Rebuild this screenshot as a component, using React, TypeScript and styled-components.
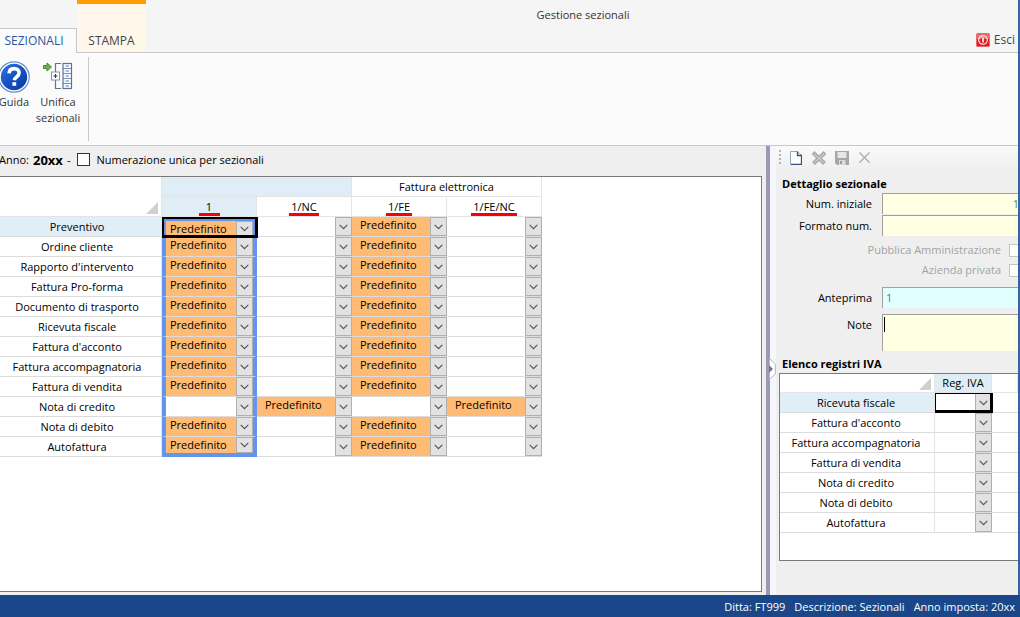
import React from "react";
import styled, { createGlobalStyle, css } from "styled-components";

const GlobalStyle = createGlobalStyle`
  *, *::before, *::after { box-sizing: border-box; }
  body { margin: 0; background: #efefef; }
  body, button, input, select, textarea {
    font-family: "Open Sans", "Noto Sans", sans-serif;
    font-size: 11px;
    line-height: 16px;
    color: #000;
  }
`;

const Window = styled.div`
  display: flex;
  flex-direction: column;
  min-height: 100vh;
`;

const Frame = styled.div`
  flex: 1;
  display: flex;
  flex-direction: column;
  border-right: 2px solid #3564a6;
  overflow: hidden;
`;

/* Title bar and ribbon */

const TitleBar = styled.header`
  display: grid;
  grid-template-columns: 1fr auto 1fr;
  height: 53px;
  background: #f5f5f5;
  border-bottom: 1px solid #c8c8c8;
`;

const Title = styled.h1`
  margin: 7px 0 0;
  padding-left: 148px;
  font-size: 11px;
  line-height: 16px;
  font-weight: 400;
  color: #333;
`;

const Tabs = styled.nav`
  display: flex;
  align-items: flex-end;
`;

const Tab = styled.button<{ $active?: boolean }>`
  height: ${(p) => (p.$active ? 25 : 53)}px;
  width: ${(p) => (p.$active ? 77 : 69)}px;
  margin-bottom: -1px;
  padding: 0;
  border: 0;
  font-size: 12px;
  ${(p) =>
    p.$active
      ? css`
          padding-right: 8px;
          background: #fbfbfb;
          border-top: 1px solid #c8c8c8;
          border-right: 1px solid #c8c8c8;
          color: #2b579a;
        `
      : css`
          padding-top: 25px;
          background: linear-gradient(90deg, #fff6ee, #fff8e8);
          border-top: 4px solid #ff9c00;
          border-bottom: 1px solid #c8c8c8;
          color: #444;
        `}
`;

const ExitButton = styled.button`
  display: flex;
  align-items: center;
  justify-self: end;
  align-self: end;
  gap: 4px;
  height: 24px;
  padding: 0 3px 0 0;
  border: 0;
  background: none;
  font-size: 12px;
  color: #444;
`;

const Ribbon = styled.div`
  display: flex;
  height: 93px;
  background: #fbfbfb;
  border-bottom: 1px solid #c8c8c8;
`;

const RibbonGroup = styled.div`
  display: flex;
  align-items: flex-start;
  margin: 4px 0;
  padding-right: 3px;
  border-right: 1px solid #c8c8c8;
`;

const RibbonButton = styled.button<{ $width: number; $bleed?: number }>`
  display: flex;
  flex-direction: column;
  align-items: center;
  width: ${(p) => p.$width}px;
  margin-left: ${(p) => -(p.$bleed ?? 0)}px;
  padding: 3px 0 0;
  border: 0;
  background: none;
  color: #333;
`;

/* Main split */

const Workspace = styled.div`
  flex: 1;
  display: flex;
`;

const Main = styled.main`
  flex: 1;
  min-width: 0;
  display: flex;
  flex-direction: column;
  padding: 0 4px 3px 0;
`;

const YearBar = styled.div`
  display: flex;
  align-items: center;
  gap: 4px;
  height: 30px;
  margin-left: -1px;
  padding-bottom: 3px;
`;

const Year = styled.b`
  font-size: 13px;
`;

const CheckLabel = styled.label`
  display: flex;
  align-items: center;
  gap: 6px;
  margin-left: 3px;
`;

const CheckBox = styled.input.attrs({ type: "checkbox" })`
  appearance: none;
  width: 13px;
  height: 13px;
  margin: 0;
  background: #fff;
  border: 1px solid #333;

  &:disabled {
    border-color: #c4c4c4;
  }
`;

const GridFrame = styled.div`
  flex: 1;
  background: #fff;
  border: 1px solid #7a7a7a;
  border-left: 0;
`;

const Grid = styled.table<{ $width: string }>`
  width: ${(p) => p.$width};
  table-layout: fixed;
  border-collapse: separate;
  border-spacing: 0;
`;

const HeadCell = styled.th<{ $tint?: boolean; $height?: number }>`
  height: ${(p) => p.$height ?? 20}px;
  padding: 0;
  font-weight: 400;
  text-align: center;
  background: ${(p) => (p.$tint ? "#dfeef6" : "#fff")};
  border-right: 1px solid #e4e4e4;
  border-bottom: 1px solid #e4e4e4;
`;

const Corner = styled(HeadCell)`
  vertical-align: bottom;

  svg {
    display: block;
    margin: 0 3px 2px auto;
  }
`;

const RowHead = styled.th<{ $active?: boolean; $shift?: number }>`
  height: 20px;
  padding: 0 ${(p) => p.$shift ?? 0}px 0 0;
  font-weight: 400;
  text-align: center;
  white-space: nowrap;
  background: ${(p) => (p.$active ? "#e0eef7" : "#fff")};
  border-right: 1px solid #e4e4e4;
  border-bottom: 1px solid #dcdcdc;
`;

const Marked = styled.span`
  display: inline-block;
  min-width: 21px;
  height: 18px;
  padding: 2px 2px 0;
  line-height: 14px;
  border-bottom: 3px solid #f5000c;
`;

const Cell = styled.td<{ $selected?: boolean; $last?: boolean; $focus?: boolean }>`
  position: relative;
  height: 20px;
  padding: 0;
  vertical-align: top;
  border-bottom: 1px solid #dcdcdc;
  ${(p) =>
    p.$selected &&
    css`
      border-left: 4px solid #6495ed;
      border-right: 4px solid #6495ed;
    `}
  ${(p) =>
    p.$last &&
    css`
      border-bottom: 4px solid #6495ed;
    `}
  ${(p) =>
    p.$focus &&
    p.$selected &&
    css`
      border-top: 4px solid #6495ed;
    `}
  ${(p) =>
    p.$focus &&
    css`
      &::after {
        content: "";
        position: absolute;
        z-index: 2;
        inset: ${p.$selected ? "-4px -5px -2px -4px" : "0 -1px -1px 0"};
        border: 2px solid #000;
        border-width: ${p.$selected ? "2px 3px 3px 2px" : "1px 3px 3px 1px"};
        pointer-events: none;
      }
    `}
`;

const Drop = styled.div<{ $filled: boolean; $height: number }>`
  display: grid;
  grid-template-columns: 1fr 17px;
  grid-template-rows: 100%;
  height: ${(p) => p.$height}px;
  background: ${(p) => (p.$filled ? "#ffbb74" : "#fff")};

  > * {
    grid-row: 1;
  }
`;

const Select = styled.select<{ $inset: number }>`
  appearance: none;
  grid-column: 1 / 3;
  width: 100%;
  min-width: 0;
  height: 16px;
  padding: 0 0 0 ${(p) => p.$inset}px;
  border: 0;
  border-radius: 0;
  outline: 0;
  background: none;
`;

const Chevron = styled.span`
  grid-column: 2;
  display: flex;
  align-items: center;
  justify-content: center;
  background: #e2e2e2;
  border: 1px solid #b0b0b0;
  pointer-events: none;
`;

/* Splitter */

const Splitter = styled.div`
  position: relative;
  width: 10px;
  background: #f6f6fd;
  border-left: 4px solid #9b9ab6;

  svg {
    position: absolute;
    left: -1px;
    top: 212px;
  }
`;

/* Detail panel */

const Side = styled.aside`
  width: 242px;
  overflow: hidden;
  padding-left: 3px;
`;

const SideToolbar = styled.div`
  display: flex;
  align-items: center;
  gap: 4px;
  height: 25px;
  margin-left: -3px;
  padding: 0 0 2px 3px;
  background: linear-gradient(#fafafa, #efefef);
`;

const ToolButton = styled.button`
  display: flex;
  align-items: center;
  justify-content: center;
  width: 19px;
  height: 20px;
  padding: 0;
  border: 0;
  background: none;
`;

const Heading = styled.h2`
  margin: 0;
  padding: 5px 0 1px 3px;
  font-size: 11px;
  line-height: 16px;
  font-weight: 700;
  white-space: nowrap;
`;

const Field = styled.div<{ $gap?: number }>`
  display: grid;
  grid-template-columns: 93px 1fr;
  column-gap: 10px;
  margin: 0 -4px ${(p) => p.$gap ?? 1}px 0;

  label {
    padding-top: 3px;
    text-align: right;
    white-space: nowrap;
  }
`;

const inputBox = css<{ $fill: string }>`
  width: 100%;
  min-width: 0;
  margin: 0;
  border: 0 solid #a0a0a0;
  border-width: 1px 0 0 1px;
  border-radius: 0;
  outline: 0;
  background: ${(p) => p.$fill};
`;

const TextInput = styled.input<{ $fill: string; $right?: boolean }>`
  ${inputBox}
  height: 21px;
  padding: 0 3px 1px;
  text-align: ${(p) => (p.$right ? "right" : "left")};
  color: #6b7777;
`;

const NoteArea = styled.textarea<{ $fill: string }>`
  ${inputBox}
  display: block;
  height: 37px;
  padding: 1px 2px;
  resize: none;
`;

const NoteBox = styled.div`
  position: relative;

  &::after {
    content: "";
    position: absolute;
    left: 2px;
    top: 3px;
    width: 1px;
    height: 15px;
    background: #000;
  }
`;

const DisabledCheck = styled.label`
  display: flex;
  align-items: center;
  justify-content: flex-end;
  gap: 8px;
  height: 20px;
  margin-right: -4px;
  white-space: nowrap;
  color: #a3a3a3;

  input {
    flex: none;
  }
`;

const Checks = styled.div`
  padding: 3px 0 7px;
`;

const RegisterFrame = styled.div`
  height: 188px;
  background: #fff;
  border: 1px solid #7a7a7a;
  border-right: 0;
`;

const StatusBar = styled.footer`
  display: flex;
  justify-content: flex-end;
  align-items: center;
  gap: 9px;
  height: 22px;
  padding: 1px 5px 0 0;
  background: #19478a;
  color: #fff;
`;

/* Icons */

const ChevronIcon = () => (
  <svg width="9" height="6" viewBox="0 0 9 6" fill="none" stroke="#555" strokeWidth="1.2">
    <path d="M.7.9 4.5 4.7 8.3.9" />
  </svg>
);

const CornerIcon = () => (
  <svg width="12" height="12" viewBox="0 0 12 12">
    <path d="M12 0v12H0z" fill="#cfcfcf" />
  </svg>
);

const HelpIcon = () => (
  <svg width="34" height="34" viewBox="0 0 34 34">
    <defs>
      <linearGradient id="help" x1="0" y1="0" x2="1" y2="1">
        <stop offset="0" stopColor="#2f74e0" />
        <stop offset=".5" stopColor="#1650c4" />
        <stop offset="1" stopColor="#0b3a9c" />
      </linearGradient>
    </defs>
    <circle cx="17" cy="17" r="15.2" fill="#fff" stroke="#6a8cc8" strokeWidth="1.2" />
    <circle cx="17" cy="17" r="13.2" fill="url(#help)" />
    <path
      d="M12 13.4c.2-3.2 2.2-4.8 5.1-4.8 3 0 5 1.6 5 4.2 0 3.900-4.400 3.900-4.800 7.400"
      fill="none"
      stroke="#fff"
      strokeWidth="3.6"
    />
    <rect x="15.4" y="22.2" width="3.8" height="3.6" fill="#fff" />
  </svg>
);

const MergeIcon = () => (
  <svg width="34" height="34" viewBox="0 0 34 34">
    <path d="M2.500 5.500H6V3l4.500 4L6 11V8.500H2.500z" fill="#6fb354" stroke="#3f8a35" />
    <g fill="none" stroke="#62748c" strokeWidth="1.2">
      <path d="M20 3.500h-5.500v25H20" />
      <rect x="22" y="3.500" width="8.500" height="25" fill="#f8fbff" />
      <path d="M22 8.500h8.500M22 13.500h8.500M22 18.500h8.500M22 23.500h8.500" strokeWidth=".8" />
    </g>
    <path d="M24.500 6h3.500M24.500 11h3.500M24.500 16h3.500M24.500 21h3.500M24.500 26h3.500" stroke="#4a86e8" strokeWidth="1.200" />
    <rect x="10.500" y="12" width="8" height="8" fill="#fff" stroke="#8793a5" />
    <path d="M12.500 16h4M14.500 14v4" stroke="#26384f" strokeWidth="1.100" />
  </svg>
);

const PowerIcon = () => (
  <svg width="14" height="14" viewBox="0 0 14 14">
    <rect width="14" height="14" rx="1.5" fill="#ee6a6a" />
    <rect x="1" y="6" width="12" height="7" fill="#dd1c22" />
    <circle cx="7" cy="7" r="4.3" fill="none" stroke="#fff" strokeWidth="1.1" />
    <path d="M7 4.600v4.800" stroke="#fff" strokeWidth="1.5" />
  </svg>
);

const GripIcon = () => (
  <svg width="3" height="15" viewBox="0 0 3 15" fill="#b4b4b4">
    {[0, 4, 8, 12].map((y) => (
      <rect key={y} y={y} width="2" height="2" />
    ))}
  </svg>
);

const NewIcon = () => (
  <svg width="12" height="14" viewBox="0 0 12 14">
    <path d="M.5.5h7l4 4v9H.5z" fill="#fff" stroke="#8fa5c4" />
    <path d="M7.500.5v4h4v8.800H1" fill="none" stroke="#34507c" strokeWidth="1.3" />
  </svg>
);

const DeleteIcon = () => (
  <svg width="16" height="16" viewBox="0 0 16 16">
    <path d="M2 2.500 13.500 13.500M14 2.500 2.500 13.500" stroke="#a9a9a9" strokeWidth="4" />
    <path d="M3 3.500 12.500 12.500M13 3.500 3.500 12.500" stroke="#c8c8c8" strokeWidth="1.5" />
  </svg>
);

const SaveIcon = () => (
  <svg width="14" height="14" viewBox="0 0 14 14">
    <path d="M0 0h14v14H2l-2-2z" fill="#a6a6a6" />
    <rect x="2.5" y="1" width="9" height="6" fill="#e6e6e6" />
    <rect x="4" y="9" width="6.5" height="5" fill="#dcdcdc" />
    <rect x="5" y="10" width="2" height="3" fill="#999" />
  </svg>
);

const CancelIcon = () => (
  <svg width="11" height="11" viewBox="0 0 11 11">
    <path d="M.5.5l10 10M10.500.5l-10 10" stroke="#aaa" strokeWidth="1.3" />
  </svg>
);

const HandleIcon = () => (
  <svg width="7" height="22" viewBox="0 0 7 22">
    <path d="M.5.5 6.300 6v10L.5 21.500z" fill="#fff" stroke="#b5b4cb" />
    <path d="M0 7l4 4-4 4z" fill="#77768f" />
  </svg>
);

/* Content */

const columns = ["1", "1/NC", "1/FE", "1/FE/NC"];

const documents = [
  "Preventivo",
  "Ordine cliente",
  "Rapporto d'intervento",
  "Fattura Pro-forma",
  "Documento di trasporto",
  "Ricevuta fiscale",
  "Fattura d'acconto",
  "Fattura accompagnatoria",
  "Fattura di vendita",
  "Nota di credito",
  "Nota di debito",
  "Autofattura",
];

const registers = [
  "Ricevuta fiscale",
  "Fattura d'acconto",
  "Fattura accompagnatoria",
  "Fattura di vendita",
  "Nota di credito",
  "Nota di debito",
  "Autofattura",
];

const isDefault = (doc: string, col: string) =>
  (doc === "Nota di credito") === col.endsWith("NC");

interface ComboProps {
  label: string;
  filled?: boolean;
  inset?: number;
  height?: number;
}

function Combo({ label, filled = false, inset = 8, height = 19 }: ComboProps) {
  return (
    <Drop $filled={filled} $height={height}>
      <Select aria-label={label} defaultValue={filled ? "d" : ""} $inset={inset}>
        <option value="" />
        <option value="d">Predefinito</option>
      </Select>
      <Chevron>
        <ChevronIcon />
      </Chevron>
    </Drop>
  );
}

export default function App() {
  const lastRow = documents.length - 1;

  return (
    <Window>
      <GlobalStyle />
      <Frame>
        <TitleBar>
          <Tabs>
            <Tab $active>SEZIONALI</Tab>
            <Tab>STAMPA</Tab>
          </Tabs>
          <Title>Gestione sezionali</Title>
          <ExitButton>
            <PowerIcon />
            Esci
          </ExitButton>
        </TitleBar>
        <Ribbon>
          <RibbonGroup>
            <RibbonButton $width={34} $bleed={3}>
              <HelpIcon />
              Guida
            </RibbonButton>
            <RibbonButton $width={54}>
              <MergeIcon />
              <span>
                Unifica
                <br />
                sezionali
              </span>
            </RibbonButton>
          </RibbonGroup>
        </Ribbon>
        <Workspace>
          <Main>
            <YearBar>
              <span>Anno:</span>
              <Year>20xx</Year>
              <span>-</span>
              <CheckLabel>
                <CheckBox />
                Numerazione unica per sezionali
              </CheckLabel>
            </YearBar>
            <GridFrame>
              <Grid $width="542px">
                <colgroup>
                  <col width="162" />
                  <col width="95" />
                  <col width="95" />
                  <col width="95" />
                  <col width="95" />
                </colgroup>
                <thead>
                  <tr>
                    <Corner rowSpan={2}>
                      <CornerIcon />
                    </Corner>
                    <HeadCell colSpan={2} $tint />
                    <HeadCell colSpan={2}>Fattura elettronica</HeadCell>
                  </tr>
                  <tr>
                    {columns.map((c, i) => (
                      <HeadCell key={c} $tint={i === 0}>
                        <Marked>{c}</Marked>
                      </HeadCell>
                    ))}
                  </tr>
                </thead>
                <tbody>
                  {documents.map((d, r) => (
                    <tr key={d}>
                      <RowHead $active={r === 0} $shift={7}>
                        {d}
                      </RowHead>
                      {columns.map((c, i) => (
                        <Cell
                          key={c}
                          $selected={i === 0}
                          $focus={i === 0 && r === 0}
                          $last={i === 0 && r === lastRow}
                        >
                          <Combo
                            label={`${d} ${c}`}
                            filled={isDefault(d, c)}
                            inset={i === 0 ? 4 : 8}
                            height={i > 0 ? 19 : r === 0 ? 15 : r === lastRow ? 16 : 19}
                          />
                        </Cell>
                      ))}
                    </tr>
                  ))}
                </tbody>
              </Grid>
            </GridFrame>
          </Main>
          <Splitter>
            <HandleIcon />
          </Splitter>
          <Side>
            <SideToolbar>
              <GripIcon />
              <ToolButton aria-label="Nuovo">
                <NewIcon />
              </ToolButton>
              <ToolButton aria-label="Elimina">
                <DeleteIcon />
              </ToolButton>
              <ToolButton aria-label="Salva">
                <SaveIcon />
              </ToolButton>
              <ToolButton aria-label="Annulla">
                <CancelIcon />
              </ToolButton>
            </SideToolbar>
            <Heading>Dettaglio sezionale</Heading>
            <Field>
              <label htmlFor="num">Num. iniziale</label>
              <TextInput id="num" $fill="#ffffe1" $right defaultValue="1" />
            </Field>
            <Field>
              <label htmlFor="fmt">Formato num.</label>
              <TextInput id="fmt" $fill="#ffffe1" />
            </Field>
            <Checks>
              <DisabledCheck>
                Pubblica Amministrazione
                <CheckBox disabled />
              </DisabledCheck>
              <DisabledCheck>
                Azienda privata
                <CheckBox disabled />
              </DisabledCheck>
            </Checks>
            <Field $gap={6}>
              <label htmlFor="ant">Anteprima</label>
              <TextInput id="ant" $fill="#e0ffff" defaultValue="1" />
            </Field>
            <Field $gap={0}>
              <label htmlFor="note">Note</label>
              <NoteBox>
                <NoteArea id="note" $fill="#ffffe1" />
              </NoteBox>
            </Field>
            <Heading>Elenco registri IVA</Heading>
            <RegisterFrame>
              <Grid $width="100%">
                <colgroup>
                  <col width="155" />
                  <col width="57" />
                  <col />
                </colgroup>
                <thead>
                  <tr>
                    <Corner $height={19}>
                      <CornerIcon />
                    </Corner>
                    <HeadCell $height={19} $tint>
                      Reg. IVA
                    </HeadCell>
                    <HeadCell $height={19} />
                  </tr>
                </thead>
                <tbody>
                  {registers.map((d, r) => (
                    <tr key={d}>
                      <RowHead $active={r === 0} $shift={2}>
                        {d}
                      </RowHead>
                      <Cell $focus={r === 0}>
                        <Combo label={`Registro IVA ${d}`} />
                      </Cell>
                      <Cell />
                    </tr>
                  ))}
                </tbody>
              </Grid>
            </RegisterFrame>
          </Side>
        </Workspace>
      </Frame>
      <StatusBar>
        <span>Ditta: FT999</span>
        <span>Descrizione: Sezionali</span>
        <span>Anno imposta: 20xx</span>
      </StatusBar>
    </Window>
  );
}
